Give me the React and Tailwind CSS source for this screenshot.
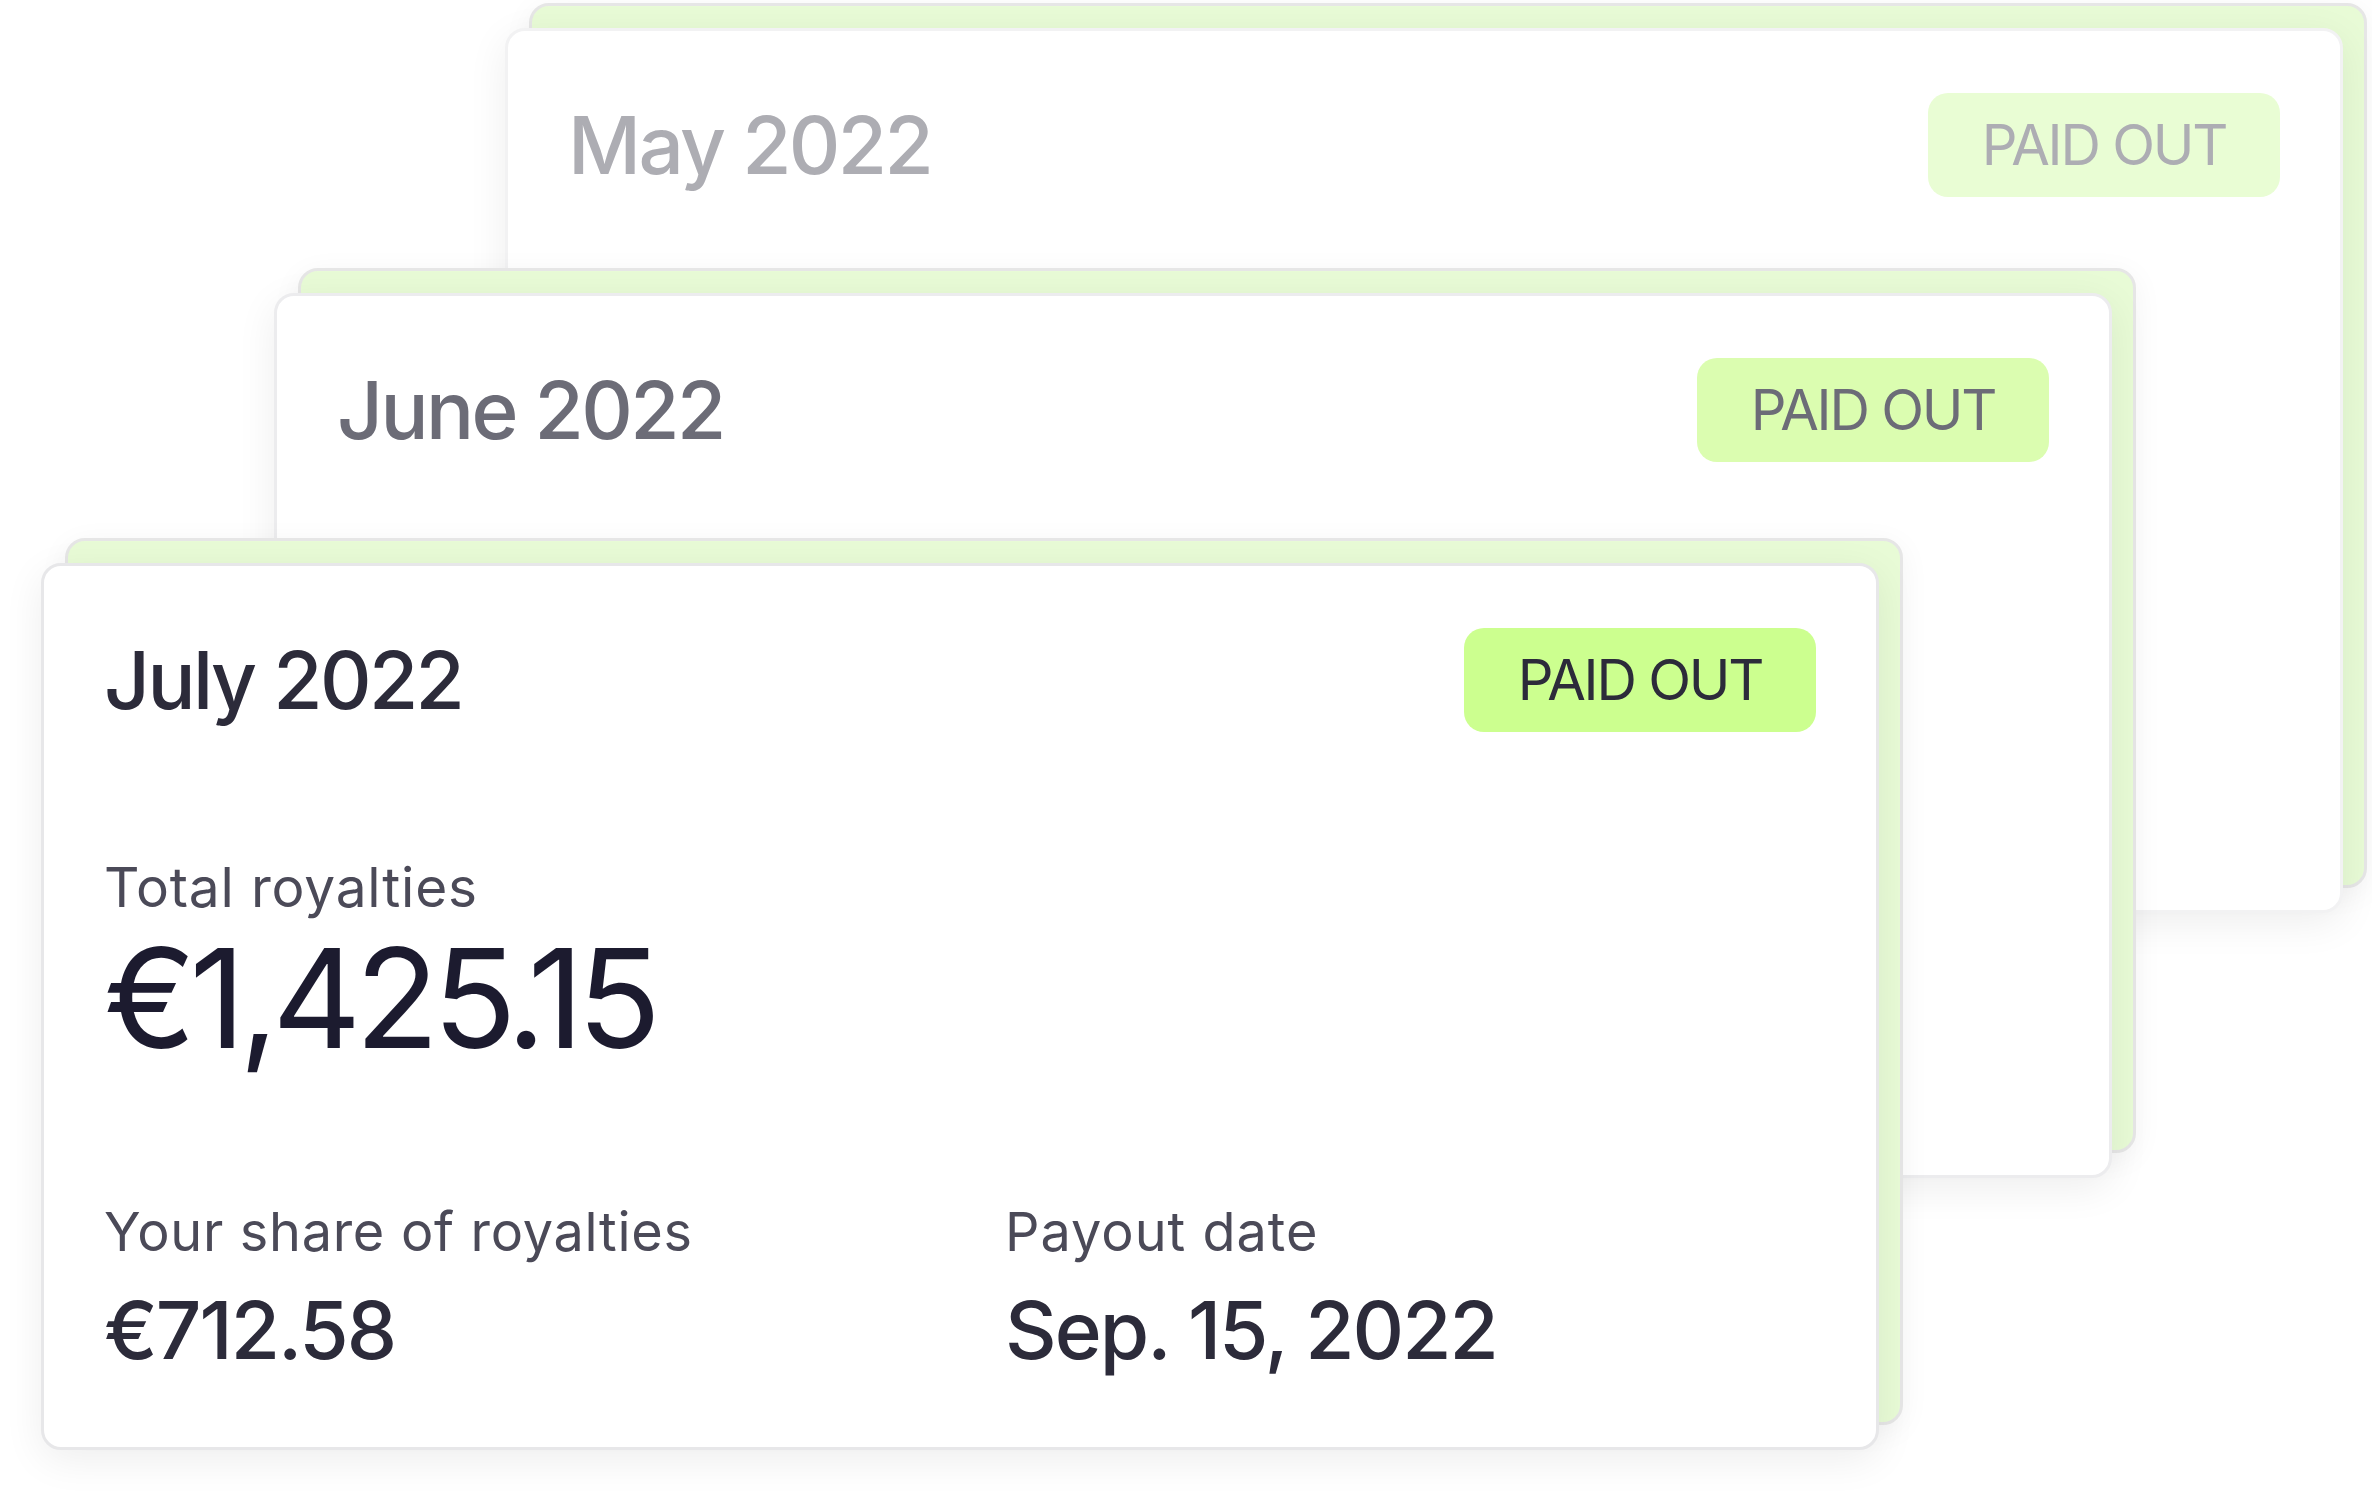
import React from "react";

const tones = {
  strong: {
    border: "border-[#e7e7e9]",
    title: "text-[#2c2b3a]",
    label: "text-[#4b4a58]",
    amount: "text-[#1c1b2f]",
    value: "text-[#2c2b3a]",
    badge: "bg-[#ccff8f] text-[#2c2b3a]",
  },
  mid: {
    border: "border-[#ececee]",
    title: "text-[#6c6c77]",
    label: "text-[#8a8a94]",
    amount: "text-[#66667a]",
    value: "text-[#6c6c77]",
    badge: "bg-[#dbfdb0] text-[#6c6c77]",
  },
  faint: {
    border: "border-[#f2f2f3]",
    title: "text-[#adadb3]",
    label: "text-[#bdbdc3]",
    amount: "text-[#a9a9b5]",
    value: "text-[#adadb3]",
    badge: "bg-[#e9fdd4] text-[#adadb3]",
  },
};

function Header({ month, t }) {
  return (
    <div className="flex items-center justify-between">
      <h2 className={`text-[80px] leading-none font-medium tracking-[-2.6px] ${t.title}`}>{month}</h2>
      <div
        className={`w-[352px] h-[104px] rounded-[20px] flex items-center justify-center text-[56px] leading-none font-normal tracking-[-2.2px] ${t.badge}`}
      >
        PAID OUT
      </div>
    </div>
  );
}

function RoyaltyCard({ pos, month, tone, full }) {
  const t = tones[tone];
  return (
    <div className={`absolute ${pos} w-[1838px]`}>
      <div className="absolute left-[24px] top-[-25px] w-full h-full rounded-[20px] border-[3px] border-[#e6e6e6] bg-[#e8fbd6] shadow-[0_6px_30px_rgba(0,0,0,0.05)]" />
      {full ? (
        <div
          className={`relative rounded-[20px] border-[3px] ${t.border} bg-white px-[60px] pt-[62px] pb-[77px] shadow-[0_10px_40px_rgba(0,0,0,0.07)]`}
        >
          <Header month={month} t={t} />
          <div className={`mt-[128px] text-[55px] leading-none tracking-[0.8px] ${t.label}`}>Total royalties</div>
          <div className={`mt-[14px] text-[138px] leading-none font-normal tracking-[-6.5px] ${t.amount}`}>€1,425.15</div>
          <div className="mt-[138px] grid grid-cols-[901px_1fr]">
            <div>
              <div className={`text-[54px] leading-none tracking-[0.7px] ${t.label}`}>Your share of royalties</div>
              <div className={`mt-[31px] text-[80px] leading-none font-medium tracking-[-2px] ${t.value}`}>€712.58</div>
            </div>
            <div>
              <div className={`text-[54px] leading-none tracking-[1px] ${t.label}`}>Payout date</div>
              <div className={`mt-[31px] text-[80px] leading-none font-medium tracking-[-2px] ${t.value}`}>Sep. 15, 2022</div>
            </div>
          </div>
        </div>
      ) : (
        <div
          className={`relative h-[885px] rounded-[20px] border-[3px] ${t.border} bg-white px-[60px] pt-[62px] shadow-[0_10px_40px_rgba(0,0,0,0.07)]`}
        >
          <Header month={month} t={t} />
        </div>
      )}
    </div>
  );
}

export default function App() {
  return (
    <div
      className="relative w-[2372px] h-[1492px] bg-white overflow-hidden"
      style={{ fontFamily: "Inter, 'Noto Sans', sans-serif" }}
    >
      <RoyaltyCard pos="left-[505px] top-[28px]" month="May 2022" tone="faint" />
      <RoyaltyCard pos="left-[274px] top-[293px]" month="June 2022" tone="mid" />
      <RoyaltyCard pos="left-[41px] top-[563px]" month="July 2022" tone="strong" full />
    </div>
  );
}
